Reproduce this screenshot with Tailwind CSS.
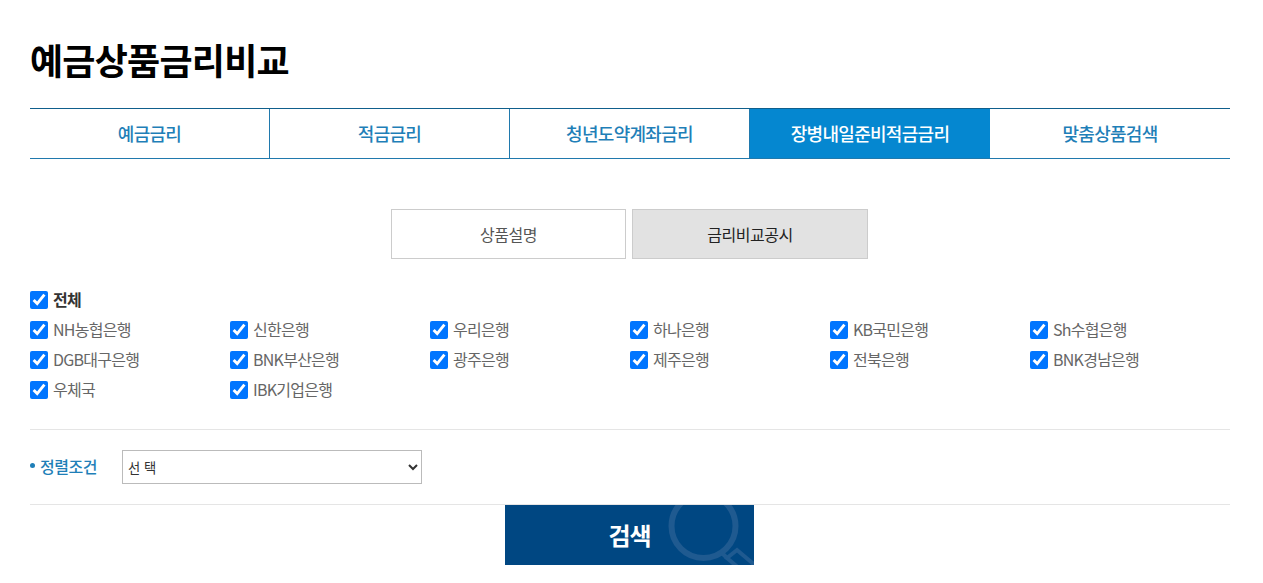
<!DOCTYPE html>
<html lang="ko">
<head>
  <meta charset="UTF-8">
  <title>예금상품금리비교</title>
  <script src="https://cdn.jsdelivr.net/npm/@tailwindcss/browser@4"></script>
</head>
<body class="bg-white font-['Noto_Sans_CJK_KR','Noto_Sans',sans-serif] overflow-hidden">
  <div class="w-[1200px] ml-[30px]">
    <h1 class="pt-[35px] h-[108px] text-[36px] leading-[48px] font-bold tracking-[-0.75px] text-black">예금상품금리비교</h1>

    <!-- Main tabs -->
    <div class="grid grid-cols-5 h-[51px] border-t border-b border-t-[#0f5f8c] border-b-[#2079ad] text-[18px] font-medium text-[#1f7fb8] tracking-[-0.7px]">
      <a class="flex items-center justify-center border-r border-[#2079ad]">예금금리</a>
      <a class="flex items-center justify-center border-r border-[#2079ad]">적금금리</a>
      <a class="flex items-center justify-center border-r border-[#2079ad]">청년도약계좌금리</a>
      <a class="flex items-center justify-center bg-[#0587d0] text-white">장병내일준비적금금리</a>
      <a class="flex items-center justify-center">맞춤상품검색</a>
    </div>

    <!-- Sub tabs -->
    <div class="flex justify-center gap-[6px] mt-[50px] ml-[-1px] text-[16px] tracking-[-0.5px]">
      <a class="w-[235px] h-[50px] flex items-center justify-center border border-[#cccccc] text-[#555555]">상품설명</a>
      <a class="w-[236px] h-[50px] flex items-center justify-center border border-[#cccccc] bg-[#e2e2e2] text-[#222222]">금리비교공시</a>
    </div>

    <!-- Banks -->
    <div class="mt-[30px] h-[141px] border-b border-[#e5e5e5] text-[16px] leading-[20px] tracking-[-0.75px] text-[#666666]">
      <label class="flex items-center gap-[5px] h-[22px] font-bold text-[#333333]">
        <input type="checkbox" checked class="w-[18px] h-[18px] m-0"><span class="-mt-[2px]">전체</span>
      </label>
      <div class="grid grid-cols-[200px_200px_200px_200px_200px_200px] auto-rows-[30px] mt-[4px]">
        <label class="flex items-center gap-[5px]"><input type="checkbox" checked class="w-[18px] h-[18px] m-0"><span class="-mt-[2px]">NH농협은행</span></label>
        <label class="flex items-center gap-[5px]"><input type="checkbox" checked class="w-[18px] h-[18px] m-0"><span class="-mt-[2px]">신한은행</span></label>
        <label class="flex items-center gap-[5px]"><input type="checkbox" checked class="w-[18px] h-[18px] m-0"><span class="-mt-[2px]">우리은행</span></label>
        <label class="flex items-center gap-[5px]"><input type="checkbox" checked class="w-[18px] h-[18px] m-0"><span class="-mt-[2px]">하나은행</span></label>
        <label class="flex items-center gap-[5px]"><input type="checkbox" checked class="w-[18px] h-[18px] m-0"><span class="-mt-[2px]">KB국민은행</span></label>
        <label class="flex items-center gap-[5px]"><input type="checkbox" checked class="w-[18px] h-[18px] m-0"><span class="-mt-[2px]">Sh수협은행</span></label>
        <label class="flex items-center gap-[5px]"><input type="checkbox" checked class="w-[18px] h-[18px] m-0"><span class="-mt-[2px]">DGB대구은행</span></label>
        <label class="flex items-center gap-[5px]"><input type="checkbox" checked class="w-[18px] h-[18px] m-0"><span class="-mt-[2px]">BNK부산은행</span></label>
        <label class="flex items-center gap-[5px]"><input type="checkbox" checked class="w-[18px] h-[18px] m-0"><span class="-mt-[2px]">광주은행</span></label>
        <label class="flex items-center gap-[5px]"><input type="checkbox" checked class="w-[18px] h-[18px] m-0"><span class="-mt-[2px]">제주은행</span></label>
        <label class="flex items-center gap-[5px]"><input type="checkbox" checked class="w-[18px] h-[18px] m-0"><span class="-mt-[2px]">전북은행</span></label>
        <label class="flex items-center gap-[5px]"><input type="checkbox" checked class="w-[18px] h-[18px] m-0"><span class="-mt-[2px]">BNK경남은행</span></label>
        <label class="flex items-center gap-[5px]"><input type="checkbox" checked class="w-[18px] h-[18px] m-0"><span class="-mt-[2px]">우체국</span></label>
        <label class="flex items-center gap-[5px]"><input type="checkbox" checked class="w-[18px] h-[18px] m-0"><span class="-mt-[2px]">IBK기업은행</span></label>
      </div>
    </div>

    <!-- Sort -->
    <div class="flex items-center h-[75px] border-b border-[#e5e5e5]">
      <span class="w-[92px] flex items-center gap-[5px] text-[16px] font-medium text-[#1f7fb8] tracking-[-0.45px] -mt-[3px]">
        <span class="w-[5px] h-[5px] rounded-full bg-[#1f7fb8]"></span>정렬조건
      </span>
      <select class="w-[300px] h-[34px] border border-[#bbbbbb] bg-white text-[13.3px] text-[#333333] pl-[1px] appearance-auto">
        <option>선 택</option>
      </select>
    </div>

    <!-- Search button -->
    <div class="flex justify-center ml-[-1px]">
      <button class="relative w-[249px] h-[60px] overflow-hidden bg-[#004782] text-white text-[24px] font-bold tracking-[-1px]">
        <svg class="absolute left-0 top-0" width="249" height="60" viewBox="0 0 249 60" fill="none" stroke="#1f5a90">
          <circle cx="198.5" cy="21" r="32" stroke-width="6"/>
          <path d="M216 47 L222 53" stroke-width="4"/>
          <path d="M222 53 L232 45 L252 62 L242 70 Z" stroke-width="4"/>
        </svg>
        <span class="relative">검색</span>
      </button>
    </div>
  </div>
</body>
</html>
